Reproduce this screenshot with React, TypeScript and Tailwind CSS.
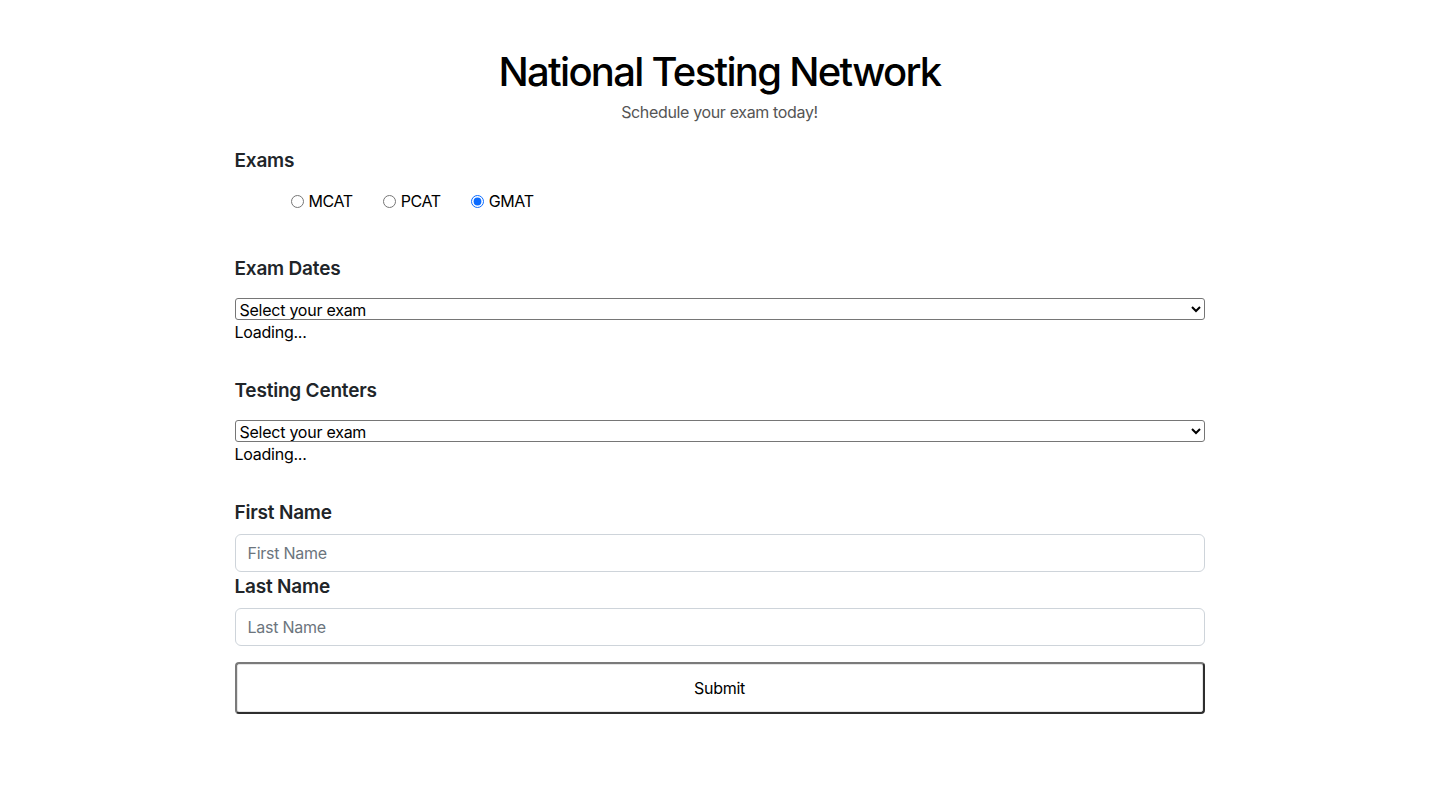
import React, { useState } from "react";

const exams = ["MCAT", "PCAT", "GMAT"];

const SectionTitle: React.FC<{ children: React.ReactNode }> = ({ children }) => (
  <h5 className="pt-px text-[19px] leading-6 font-semibold text-[#212529] tracking-[-0.2px]">
    {children}
  </h5>
);

export default function App() {
  const [exam, setExam] = useState("GMAT");
  const [firstName, setFirstName] = useState("");
  const [lastName, setLastName] = useState("");

  return (
    <div className="min-h-screen bg-white font-['Inter',sans-serif] text-black tracking-[-0.25px]">
      <div className="w-[970px] mx-auto pt-[48px] pb-16">
        <h1 className="text-center text-[40px] leading-[48px] font-medium tracking-[-1.7px]">
          National Testing Network
        </h1>
        <p className="mt-[4px] text-center text-base leading-6 text-[#555] tracking-[-0.35px]">
          Schedule your exam today!
        </p>

        <form onSubmit={(e) => e.preventDefault()}>
          <div className="mt-[24px]">
            <SectionTitle>Exams</SectionTitle>
            <div className="mt-[16px] ml-[56px] flex items-center gap-[30px] text-base leading-6 tracking-[-0.4px]">
              {exams.map((name) => (
                <label key={name} className="flex items-center gap-[5px]">
                  <input
                    type="radio"
                    name="exam"
                    className="m-0 w-[13px] h-[13px] accent-[#0b6bff]"
                    checked={exam === name}
                    onChange={() => setExam(name)}
                  />
                  {name}
                </label>
              ))}
            </div>
          </div>

          <div className="mt-[43px]">
            <SectionTitle>Exam Dates</SectionTitle>
            <select className="mt-[17px] block w-full h-[22px] border border-[#767676] rounded-[3px] pl-0 text-base leading-5 text-black bg-white">
              <option>Select your exam</option>
            </select>
            <div className="text-base leading-6">Loading...</div>
          </div>

          <div className="mt-[34px]">
            <SectionTitle>Testing Centers</SectionTitle>
            <select className="mt-[17px] block w-full h-[22px] border border-[#767676] rounded-[3px] pl-0 text-base leading-5 text-black bg-white">
              <option>Select your exam</option>
            </select>
            <div className="text-base leading-6">Loading...</div>
          </div>

          <div className="mt-[34px]">
            <SectionTitle>First Name</SectionTitle>
            <input
              className="mt-[9px] block w-full h-[38px] border border-[#ced4da] rounded-md px-3 text-base text-[#212529] placeholder:text-[#6c757d] outline-none"
              placeholder="First Name"
              value={firstName}
              onChange={(e) => setFirstName(e.target.value)}
            />
          </div>

          <div className="mt-[2px]">
            <SectionTitle>Last Name</SectionTitle>
            <input
              className="mt-[9px] block w-full h-[38px] border border-[#ced4da] rounded-md px-3 text-base text-[#212529] placeholder:text-[#6c757d] outline-none"
              placeholder="Last Name"
              value={lastName}
              onChange={(e) => setLastName(e.target.value)}
            />
          </div>

          <button
            type="submit"
            className="mt-[16px] block w-full h-[52px] border-2 border-t-[#7a7a7a] border-l-[#7a7a7a] border-r-[#2e2e2e] border-b-[#2e2e2e] rounded-[4px] bg-white text-base text-black shadow-[inset_0_0_0_1px_#e5e5e5]"
          >
            Submit
          </button>
        </form>
      </div>
    </div>
  );
}
